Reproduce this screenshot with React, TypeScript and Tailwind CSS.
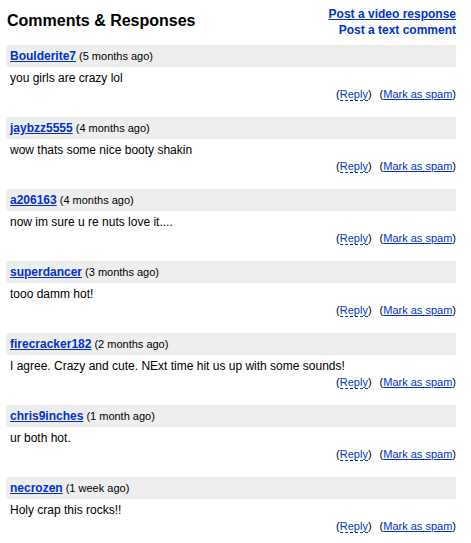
import React from "react";

type Comment = {
  user: string;
  when: string;
  text: string;
};

const comments: Comment[] = [
  { user: "Boulderite7", when: "5 months ago", text: "you girls are crazy lol" },
  { user: "jaybzz5555", when: "4 months ago", text: "wow thats some nice booty shakin" },
  { user: "a206163", when: "4 months ago", text: "now im sure u re nuts love it...." },
  { user: "superdancer", when: "3 months ago", text: "tooo damm hot!" },
  {
    user: "firecracker182",
    when: "2 months ago",
    text: "I agree. Crazy and cute. NExt time hit us up with some sounds!",
  },
  { user: "chris9inches", when: "1 month ago", text: "ur both hot." },
  { user: "necrozen", when: "1 week ago", text: "Holy crap this rocks!!" },
];

const CommentRow = ({ c }: { c: Comment }) => (
  <div className="mb-[15px]">
    {/* header bar */}
    <div className="h-[22px] bg-[#eeeeee] flex items-center px-[4px] text-[11px] text-black">
      <a href="#" className="text-[12px] font-bold text-[#0033cc] underline mr-[3px]">
        {c.user}
      </a>
      <span>({c.when})</span>
    </div>
    <div className="pt-[3px] px-[4px] text-[12px] leading-[16px] text-black">{c.text}</div>
    <div className="flex justify-end text-[11px] leading-[16px] text-black">
      <span>
        (
        <a href="#" className="text-[#0033cc] border-b border-dashed border-[#0033cc]">
          Reply
        </a>
        )
      </span>
      <span className="ml-[8px]">
        (
        <a href="#" className="text-[#0033cc] underline">
          Mark as spam
        </a>
        )
      </span>
    </div>
  </div>
);

export default function App() {
  return (
    <div
      className="bg-white min-h-[543px] w-[471px]"
      style={{ fontFamily: '"Liberation Sans", Arial, sans-serif' }}
    >
      <div className="ml-[6px] w-[450px]">
        <div className="flex justify-between h-[45px]">
          <h2 className="pl-[1px] pt-[11px] text-[16px] leading-[20px] font-bold text-black">
            Comments &amp; Responses
          </h2>
          <div className="flex flex-col items-end pt-[6px] text-[12px] leading-[16px] font-bold">
            <a href="#" className="text-[#0033cc] underline">
              Post a video response
            </a>
            <a href="#" className="text-[#0033cc]">
              Post a text comment
            </a>
          </div>
        </div>
        {comments.map((c) => (
          <CommentRow key={c.user} c={c} />
        ))}
      </div>
    </div>
  );
}
